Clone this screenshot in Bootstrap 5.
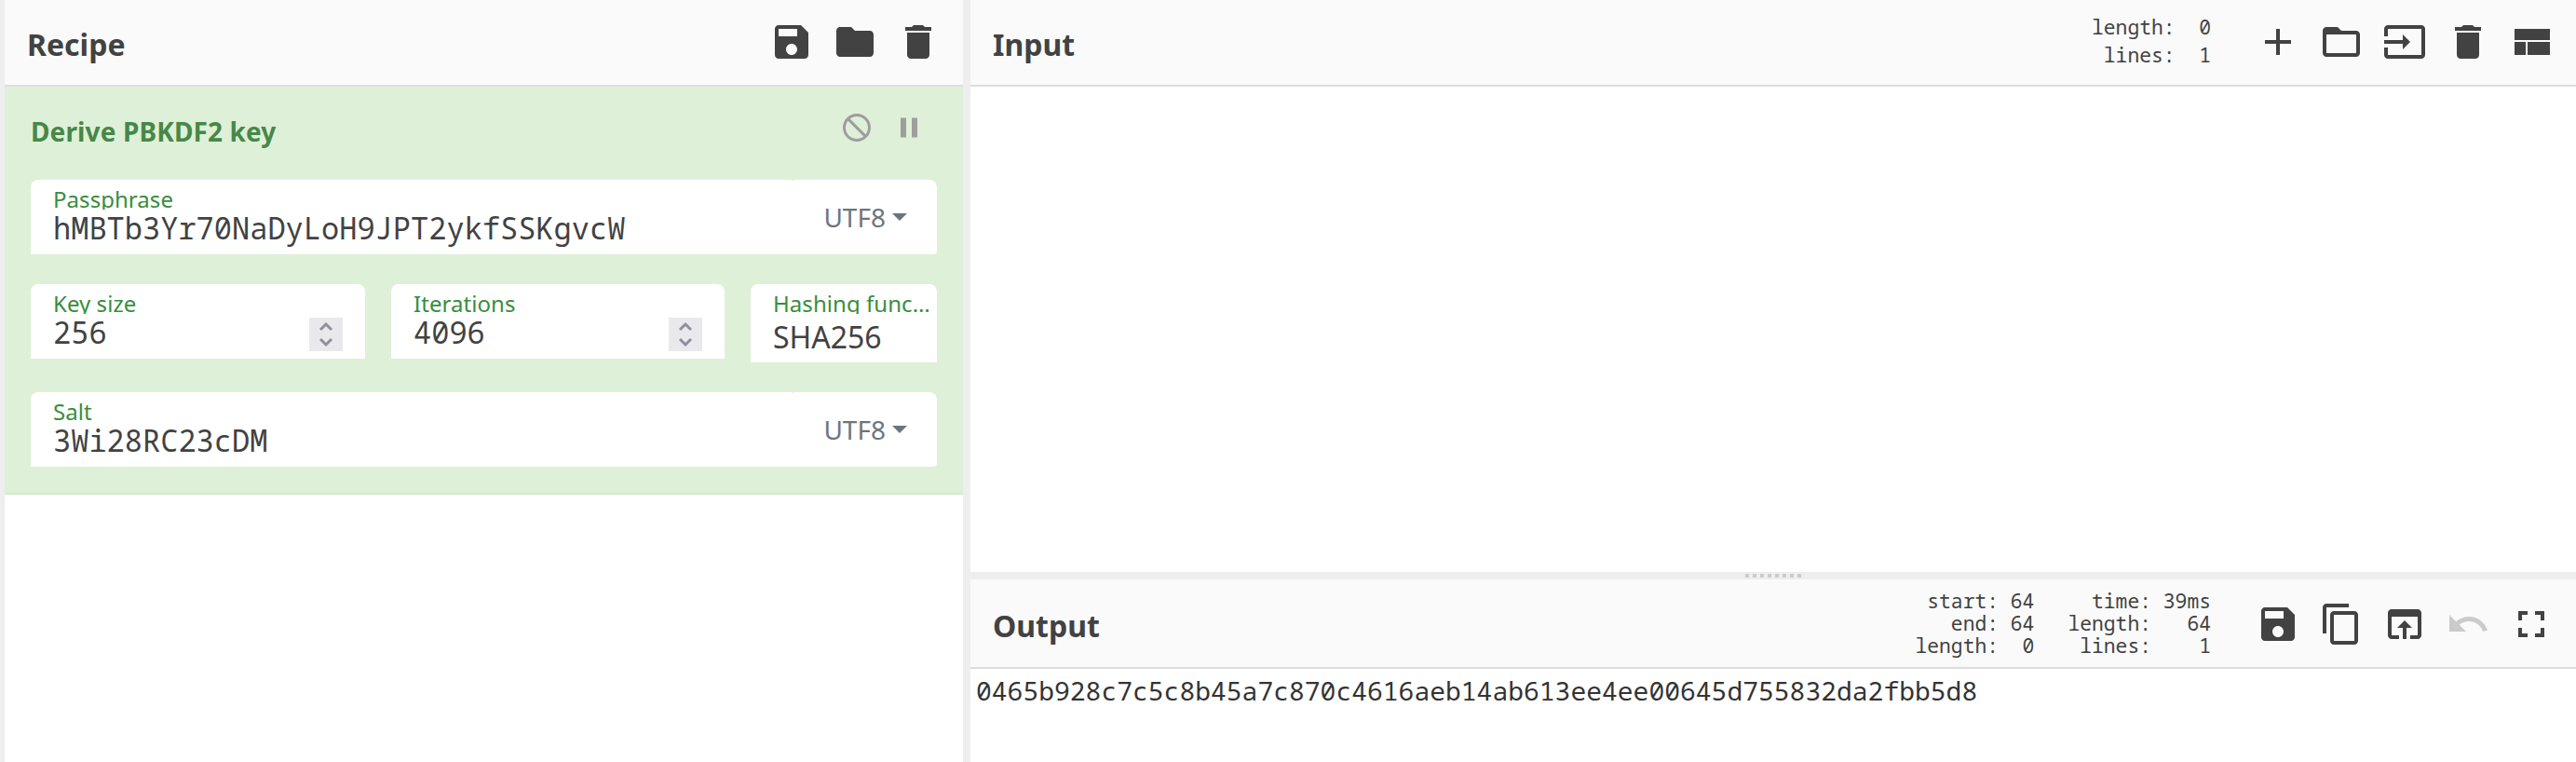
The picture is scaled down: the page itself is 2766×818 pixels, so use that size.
<!DOCTYPE html>
<html lang="en">
<head>
<meta charset="utf-8">
<title>Recipe</title>
<link href="https://cdn.jsdelivr.net/npm/bootstrap@5.3.0/dist/css/bootstrap.min.css" rel="stylesheet">
<script src="https://cdn.jsdelivr.net/npm/bootstrap@5.3.0/dist/js/bootstrap.bundle.min.js"></script>
<style>
  body { font-family: "Noto Sans", sans-serif; color: #424242; background: #fff; width: 2766px; height: 818px; }
  .mono { font-family: "Noto Sans Mono", "Noto Mono", "DejaVu Sans Mono", monospace; white-space: pre; }
  .gutter { background: #eee; }
  .edge { width: 5px; }
  .split-v { width: 8px; }
  .split-h { height: 8px; }
  .recipe-pane { width: 1029px; }
  .title-bar { height: 93px; background: #fafafa; border-bottom: 2px solid #ddd; padding: 0 24px; }
  .title-bar h2 { font-size: 32px; font-weight: 700; line-height: 44px; margin: 4px 0 0; }
  .tools { gap: 20px; margin-top: -1px; }
  .tools svg { width: 48px; height: 48px; fill: #424242; display: block; }
  .input-pane { height: 614px; }
  .output-bar { height: 96px; }
  .output-bar h2 { margin-top: 6px; }
  .output-bar .tools { margin-top: 2px; }
  .stats { font-size: 21.33px; line-height: 24px; margin-right: 48px; }
  .stats-input { line-height: 30px; margin-top: -4px; }
  .stats-range { margin-right: 36px; }
  .op { height: 438px; background: #dff0d8; border-bottom: 2px solid #d6e9c6; padding: 0 28px; }
  .op-head { height: 100px; }
  .op-head h3 { font-size: 28px; font-weight: 700; color: #468847; line-height: 38px; margin: 0; padding-top: 29px; letter-spacing: .12px; }
  .op-icons { gap: 20px; margin: 26px 12px 0 0; }
  .op-icons svg { width: 36px; height: 36px; fill: #9e9e9e; display: block; }
  .arg-row { gap: 28px; margin: 32px 0; }
  .arg { background: #fff; height: 80px; border-radius: 8px 8px 0 0; padding-left: 24px; min-width: 0; }
  .arg.flex-grow-1 { border-top-right-radius: 3px; }
  .arg label { display: block; color: #388e3c; font-size: 24px; line-height: 24px; height: 23px; margin-top: 9px; overflow: hidden; white-space: nowrap; text-overflow: ellipsis; letter-spacing: .05px; }
  .arg .val { font-size: 32px; line-height: 40px; }
  .arg-num { width: 359px; }
  .arg-num + .arg-num { width: 358px; }
  .enc { background: #fff; width: 154px; height: 80px; border-radius: 0 8px 4px 0; color: #6c757d; font-size: 28px; padding-right: 32px; }
  .enc .dropdown-toggle::after { margin-left: 7px; vertical-align: 7px; border-top-width: 8px; border-left-width: 8px; border-right-width: 8px; }
  .spin { width: 36px; height: 36px; background: #e9e9ed; margin: 36px 24px 0 0; }
  .hash { height: 84px; width: 200px; }
  .hash label { padding-right: 6px; }
  .hash .val { padding-top: 5px; }
  .out { font-size: 28px; color: #333; padding: 4px 0 0 6px; line-height: 38px; }
</style>
</head>
<body class="d-flex overflow-hidden">
<svg class="d-none">
  <symbol id="save" viewBox="0 0 24 24"><path d="M17 3H5c-1.11 0-2 .9-2 2v14c0 1.1.89 2 2 2h14c1.1 0 2-.9 2-2V7l-4-4zm-5 16c-1.66 0-3-1.34-3-3s1.34-3 3-3 3 1.34 3 3-1.34 3-3 3zm3-10H5V5h10v4z"/></symbol>
  <symbol id="folder" viewBox="0 0 24 24"><path d="M10 4H4c-1.1 0-1.99.9-1.99 2L2 18c0 1.1.9 2 2 2h16c1.1 0 2-.9 2-2V8c0-1.1-.9-2-2-2h-8l-2-2z"/></symbol>
  <symbol id="trash" viewBox="0 0 24 24"><path d="M6 19c0 1.1.9 2 2 2h8c1.1 0 2-.9 2-2V7H6v12zM19 4h-3.5l-1-1h-5l-1 1H5v2h14V4z"/></symbol>
  <symbol id="plus" viewBox="0 0 24 24"><path d="M19 13h-6v6h-2v-6H5v-2h6V5h2v6h6v2z"/></symbol>
  <symbol id="folder-open" viewBox="0 0 24 24"><path d="M20 6h-8l-2-2H4c-1.1 0-1.99.9-1.99 2L2 18c0 1.1.9 2 2 2h16c1.1 0 2-.9 2-2V8c0-1.1-.9-2-2-2zm0 12H4V8h16v10z"/></symbol>
  <symbol id="import" viewBox="0 0 24 24"><path d="M21 3.01H3c-1.1 0-2 .9-2 2V9h2V4.99h18v14.03H3V15H1v4.01c0 1.1.9 1.98 2 1.98h18c1.1 0 2-.88 2-1.98v-14c0-1.11-.9-2-2-2zM11 16l4-4-4-4v3H1v2h10v3z"/></symbol>
  <symbol id="layout" viewBox="0 0 24 24"><path d="M3 19h6v-7H3v7zm7 0h12v-7H10v7zM3 5v6h19V5H3z"/></symbol>
  <symbol id="copy" viewBox="0 0 24 24"><path d="M16 1H4c-1.1 0-2 .9-2 2v14h2V3h12V1zm3 4H8c-1.1 0-2 .9-2 2v14c0 1.1.9 2 2 2h11c1.1 0 2-.9 2-2V7c0-1.1-.9-2-2-2zm0 16H8V7h11v14z"/></symbol>
  <symbol id="browser" viewBox="0 0 24 24"><path d="M19 4H5c-1.11 0-2 .9-2 2v12c0 1.1.89 2 2 2h4v-2H5V8h14v10h-4v2h4c1.1 0 2-.9 2-2V6c0-1.1-.89-2-2-2zm-7 6l-4 4h3v6h2v-6h3l-4-4z"/></symbol>
  <symbol id="undo" viewBox="0 0 24 24"><path d="M12.5 8c-2.65 0-5.05.99-6.9 2.6L2 7v9h9l-3.62-3.62c1.39-1.16 3.16-1.88 5.12-1.88 3.54 0 6.55 2.31 7.6 5.5l2.37-.78C21.08 11.03 17.15 8 12.5 8z"/></symbol>
  <symbol id="full" viewBox="0 0 24 24"><path d="M7 14H5v5h5v-2H7v-3zm-2-4h2V7h3V5H5v5zm12 7h-3v2h5v-5h-2v3zM14 5v2h3v3h2V5h-5z"/></symbol>
  <symbol id="block" viewBox="0 0 24 24"><path d="M12 2C6.48 2 2 6.48 2 12s4.48 10 10 10 10-4.48 10-10S17.52 2 12 2zM4 12c0-4.42 3.58-8 8-8 1.85 0 3.55.63 4.9 1.69L5.69 16.9C4.63 15.55 4 13.85 4 12zm8 8c-1.85 0-3.55-.63-4.9-1.69L18.31 7.1C19.37 8.45 20 10.15 20 12c0 4.42-3.58 8-8 8z" transform="matrix(-1 0 0 1 24 0)"/></symbol>
  <symbol id="pause" viewBox="0 0 24 24"><path d="M6 19h4V5H6v14zm8-14v14h4V5h-4z"/></symbol>
  <symbol id="arrows" viewBox="0 0 36 36"><path d="M12 13l6-6 6 6M12 23l6 6 6-6" fill="none" stroke="#8f8f9d" stroke-width="3"/></symbol>
</svg>
<div class="gutter edge flex-shrink-0"></div>
<section class="recipe-pane flex-shrink-0">
  <header class="title-bar d-flex align-items-center justify-content-between">
    <h2>Recipe</h2>
    <div class="tools d-flex"><svg><use href="#save"/></svg><svg><use href="#folder"/></svg><svg><use href="#trash"/></svg></div>
  </header>
  <div class="op">
    <div class="op-head d-flex justify-content-between">
      <h3>Derive PBKDF2 key</h3>
      <div class="op-icons d-flex"><svg><use href="#block"/></svg><svg><use href="#pause"/></svg></div>
    </div>
    <div class="d-flex">
      <div class="arg flex-grow-1"><label>Passphrase</label><div class="val mono">hMBTb3Yr70NaDyLoH9JPT2ykfSSKgvcW</div></div>
      <div class="enc d-flex align-items-center justify-content-end"><span class="dropdown-toggle">UTF8</span></div>
    </div>
    <div class="arg-row d-flex">
      <div class="arg arg-num d-flex justify-content-between"><div><label>Key size</label><div class="val mono">256</div></div><svg class="spin"><use href="#arrows"/></svg></div>
      <div class="arg arg-num d-flex justify-content-between"><div><label>Iterations</label><div class="val mono">4096</div></div><svg class="spin"><use href="#arrows"/></svg></div>
      <div class="arg hash"><label>Hashing function</label><div class="val">SHA256</div></div>
    </div>
    <div class="d-flex">
      <div class="arg flex-grow-1"><label>Salt</label><div class="val mono">3Wi28RC23cDM</div></div>
      <div class="enc d-flex align-items-center justify-content-end"><span class="dropdown-toggle">UTF8</span></div>
    </div>
  </div>
</section>
<div class="gutter split-v flex-shrink-0"></div>
<section class="flex-grow-1 d-flex flex-column">
  <div class="input-pane">
    <header class="title-bar d-flex align-items-center">
      <h2 class="me-auto">Input</h2>
      <div class="stats stats-input mono">length:  0
 lines:  1</div>
      <div class="tools d-flex"><svg><use href="#plus"/></svg><svg><use href="#folder-open"/></svg><svg><use href="#import"/></svg><svg><use href="#trash"/></svg><svg><use href="#layout"/></svg></div>
    </header>
  </div>
  <div class="gutter split-h d-flex justify-content-center"><svg width="64" height="8"><path d="M2 4H64" stroke="#ccc" stroke-width="4" stroke-dasharray="4 4"/></svg></div>
  <header class="title-bar output-bar d-flex align-items-center">
    <h2 class="me-auto">Output</h2>
    <div class="stats stats-range mono"> start: 64
   end: 64
length:  0</div>
    <div class="stats mono">  time: 39ms
length:   64
 lines:    1</div>
    <div class="tools d-flex"><svg><use href="#save"/></svg><svg><use href="#copy"/></svg><svg><use href="#browser"/></svg><svg class="opacity-25"><use href="#undo"/></svg><svg><use href="#full"/></svg></div>
  </header>
  <div class="out mono">0465b928c7c5c8b45a7c870c4616aeb14ab613ee4ee00645d755832da2fbb5d8</div>
</section>
</body>
</html>
